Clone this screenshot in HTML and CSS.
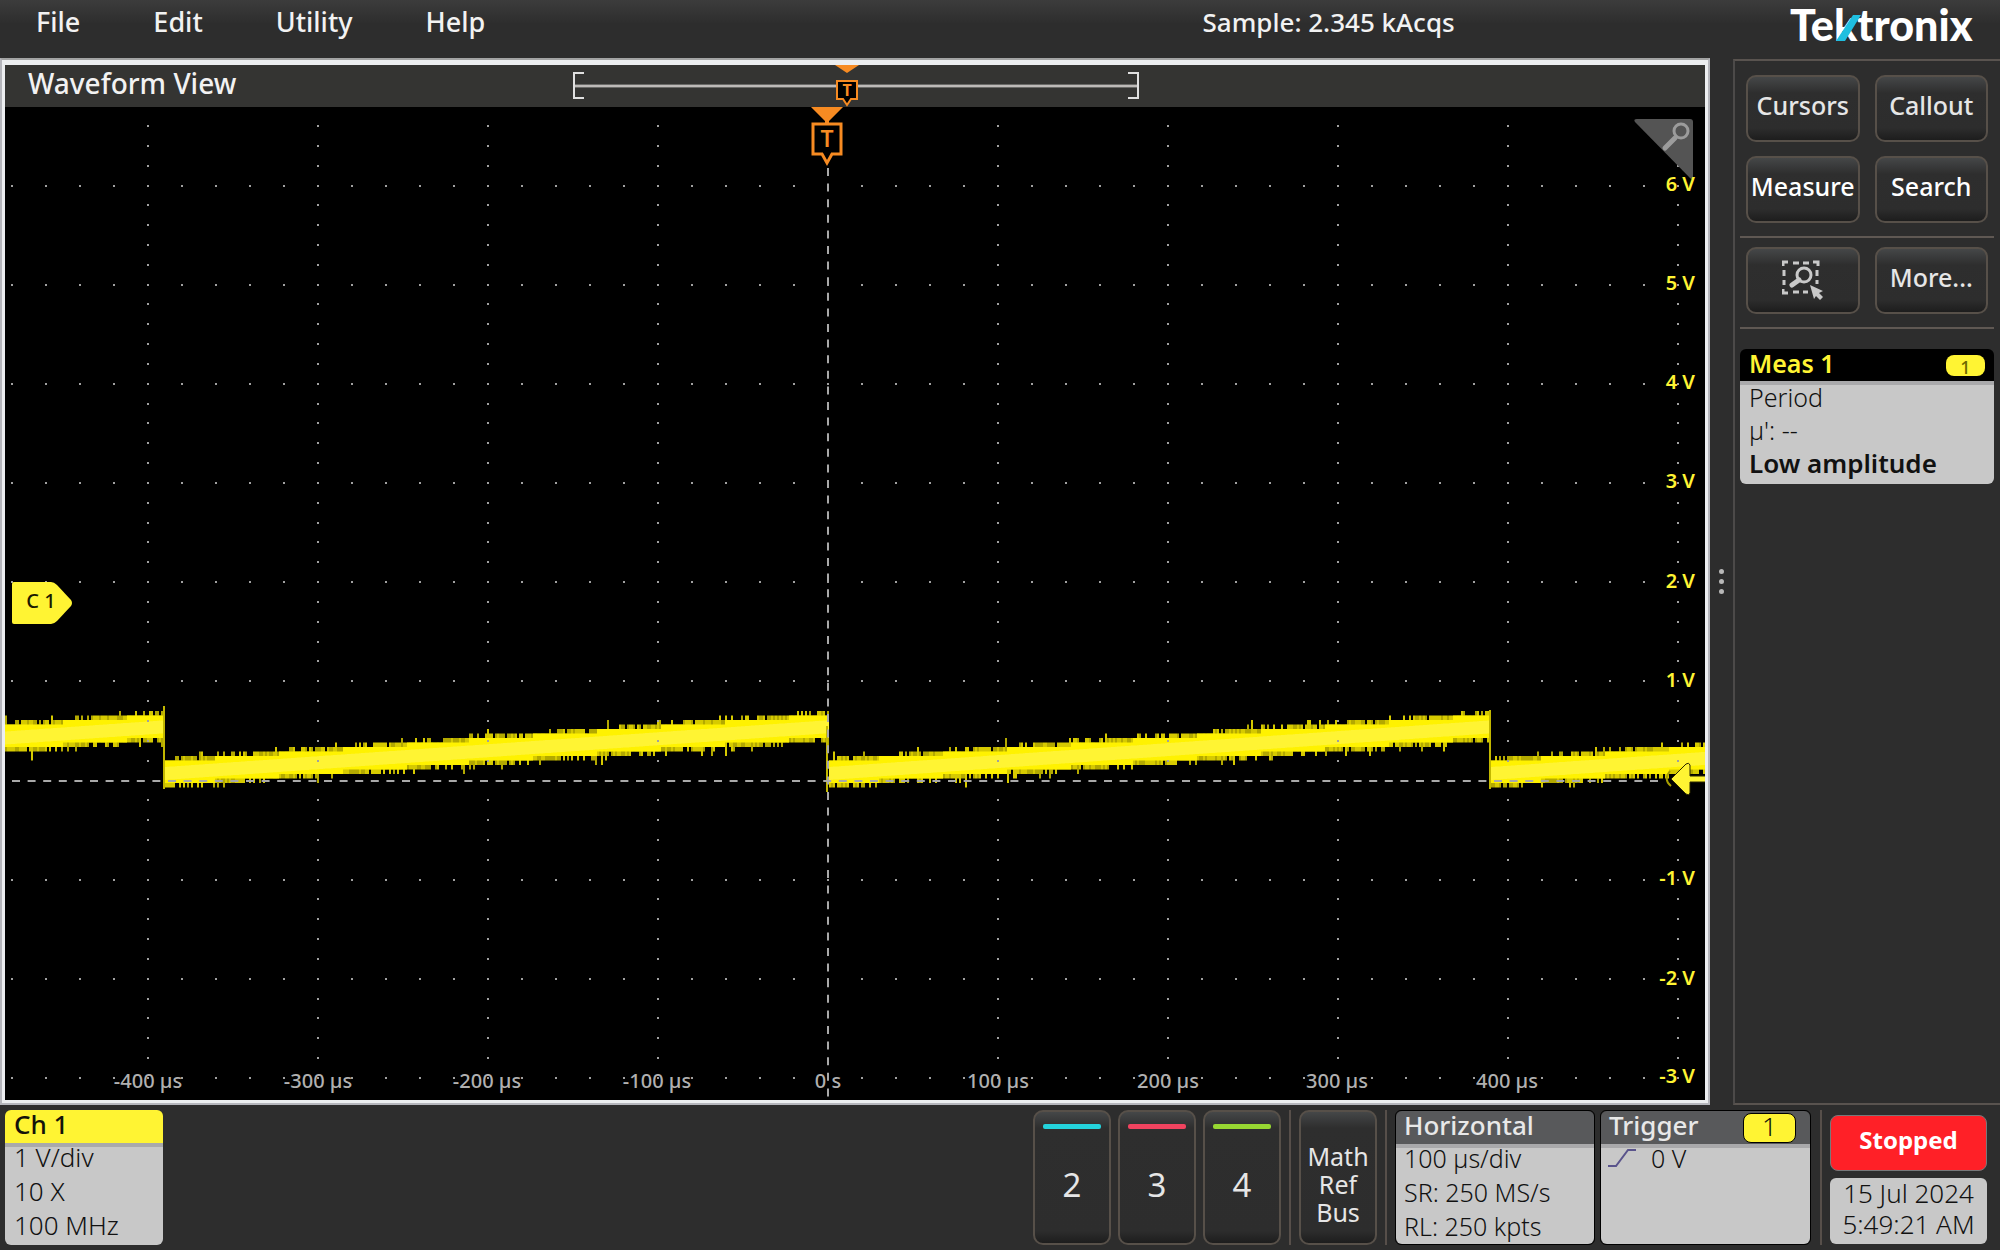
FILE: index.html
```html
<!DOCTYPE html>
<html lang="en">
<head>
<meta charset="utf-8">
<meta name="viewport" content="width=device-width, initial-scale=1">
<title>Oscilloscope</title>
<link rel="stylesheet" href="styles.css">
</head>
<body>
<header class="topbar">
  <nav class="menu">
    <button type="button" class="menu-item">File</button>
    <button type="button" class="menu-item">Edit</button>
    <button type="button" class="menu-item">Utility</button>
    <button type="button" class="menu-item">Help</button>
  </nav>
  <div class="sample">Sample: 2.345 kAcqs</div>
  <svg class="logo" viewBox="0 0 190 46" role="img" aria-label="Tektronix">
    <text x="2" y="41" class="logo-text">Tektronix</text>
    <path d="M48 41 65 15h8L57 41z" fill="#1fbfe0"/>
  </svg>
</header>

<main class="workspace">
  <section class="view">
    <div class="view-head">
      <h1 class="view-title">Waveform View</h1>
      <svg class="overview" viewBox="572 65 568 42" aria-hidden="true">
        <path d="M574 86H1138" stroke="#6a6a68" stroke-width="4"/>
        <path d="M574 86H1138" stroke="#bdbab8" stroke-width="2"/>
        <path d="M584 73H574V98H584M1128 73H1138V98H1128" fill="none" stroke="#e0e0e0" stroke-width="2"/>
        <path d="M835 65H859L847 73z" fill="#f78b22"/>
        <path d="M837 81H857V99H851L847 105 843 99H837z" fill="#000" stroke="#f78b22" stroke-width="2"/>
        <text x="847" y="96" class="mark-small">T</text>
      </svg>
    </div>
    <svg class="plot" viewBox="5 107 1700 993">
      <path id="fringe-low" fill="#b3a900"/>
      <path id="fringe" fill="#d6ca00"/>
      <path id="core" fill="#fff200"/>
      <path id="glow" fill="#fff433"/>
      <path d="M164 706V789M827 726V792M1490 710V789" stroke="#c2b700" stroke-width="2"/>
      <path id="dots" fill="#a0a0a0"/>
      <path d="M12 781H1664" stroke="#a9a9a9" stroke-width="2" stroke-dasharray="8 7.6"/>
      <path d="M828 168V1100" stroke="#a9a9a9" stroke-width="2" stroke-dasharray="8 7.6"/>
      <path d="M811 107H843L829 121V123H825V121z" fill="#f78b22"/>
      <path d="M813 124H841V154H832L827 163 822 154H813z" fill="#000" stroke="#f78b22" stroke-width="3"/>
      <text x="827" y="147" class="mark">T</text>
      <path d="M1637 119H1690Q1693 119 1693 122V177Q1693 181 1690 178L1635 122Q1633 119 1637 119z" fill="#545454"/>
      <path d="M1675 138 1665 148" stroke="#9c9c9c" stroke-width="5" stroke-linecap="round"/>
      <circle cx="1681" cy="131" r="7" fill="none" stroke="#9c9c9c" stroke-width="3"/>
      <path d="M14 582H51Q54 582 57 585L71 600Q73 603 71 606L57 621Q54 624 51 624H14Q12 624 12 622V584Q12 582 14 582z" fill="#fff433"/>
      <text x="41" y="608" class="tag">C 1</text>
      <path d="M1670 771Q1663 780 1671 786" fill="none" stroke="#a89f00" stroke-width="2"/>
      <path d="M1671 779 1686 764Q1689 762 1690 765V776H1706V782H1690V793Q1689 796 1686 794z" fill="#fff433" stroke="#2a2700"/>
      <g class="volts">
        <text x="1695" y="191">6 V</text><text x="1695" y="290">5 V</text>
        <text x="1695" y="389">4 V</text><text x="1695" y="488">3 V</text>
        <text x="1695" y="588">2 V</text><text x="1695" y="687">1 V</text>
        <text x="1695" y="885">-1 V</text><text x="1695" y="985">-2 V</text>
        <text x="1695" y="1083">-3 V</text>
      </g>
      <g class="times">
        <text x="148" y="1088">-400 µs</text><text x="318" y="1088">-300 µs</text>
        <text x="487" y="1088">-200 µs</text><text x="657" y="1088">-100 µs</text>
        <text x="828" y="1088">0 s</text>
        <text x="998" y="1088">100 µs</text><text x="1168" y="1088">200 µs</text>
        <text x="1337" y="1088">300 µs</text><text x="1507" y="1088">400 µs</text>
      </g>
    </svg>
  </section>

  <div class="splitter"><i></i><i></i><i></i></div>

  <aside class="side">
    <div class="tools">
      <button type="button" class="key">Cursors</button>
      <button type="button" class="key">Callout</button>
      <button type="button" class="key bright">Measure</button>
      <button type="button" class="key bright">Search</button>
    </div>
    <div class="tools">
      <button type="button" class="key" aria-label="Zoom area">
        <svg class="zoom-icon" viewBox="0 0 42 40" aria-hidden="true">
          <g fill="none" stroke="#c9c9c9">
            <path d="M1 6V2H6M11 3H17M21 3H27M31 2H36V6M2 10V16M35 10V16M2 20V25M35 20V24M1 29V33H6M11 32H17M21 32H26" stroke-width="3"/>
            <circle cx="22" cy="15" r="7" stroke-width="3"/>
            <path d="M17 20 10 25" stroke-width="5" stroke-linecap="round"/>
          </g>
          <path d="M28 25 41 31 37 33 41 37 38 40 34 36 32 39z" fill="#c9c9c9"/>
        </svg>
      </button>
      <button type="button" class="key">More...</button>
    </div>
    <article class="meas">
      <div class="meas-head"><h2>Meas 1</h2><span class="chip">1</span></div>
      <div class="card-body"><p>Period</p><p>µ': --</p><p class="strong">Low amplitude</p></div>
    </article>
  </aside>
</main>

<footer class="bottombar">
  <article class="card channel">
    <h2 class="card-head yellow">Ch 1</h2>
    <div class="card-body"><p>1 V/div</p><p>10 X</p><p>100 MHz</p></div>
  </article>
  <div class="channels">
    <button type="button" class="key chan cyan">2</button>
    <button type="button" class="key chan red">3</button>
    <button type="button" class="key chan green">4</button>
  </div>
  <div class="math-wrap"><button type="button" class="key math">Math<br>Ref<br>Bus</button></div>
  <article class="card horizontal">
    <h2 class="card-head grey">Horizontal</h2>
    <div class="card-body"><p>100 µs/div</p><p>SR: 250 MS/s</p><p>RL: 250 kpts</p></div>
  </article>
  <article class="card trigger">
    <div class="card-head grey"><h2>Trigger</h2><span class="source">1</span></div>
    <div class="card-body"><p class="level">
      <svg class="edge" viewBox="0 0 28 20" aria-hidden="true"><path d="M0 18H8L20 2H28" fill="none" stroke="#5a548c" stroke-width="2"/></svg>0 V</p></div>
  </article>
  <div class="status">
    <button type="button" class="stopped">Stopped</button>
    <time class="clock" datetime="2024-07-15T05:49:21">15 Jul 2024<br>5:49:21 AM</time>
  </div>
</footer>
<script src="scope.js"></script>
</body>
</html>
```
FILE: styles.css
```css
* { box-sizing: border-box; }

body {
  margin: 0;
  min-height: 100vh;
  display: flex;
  flex-direction: column;
  background: #2d2d2d;
  color: #f2f2f2;
  font-family: "Noto Sans", "Open Sans", sans-serif;
  font-size: 25px;
  line-height: 34px;
}

h1, h2, p { margin: 0; font: inherit; }
button { font: inherit; color: inherit; padding: 0; border: 0; background: none; }
svg { display: block; }

/* Top bar */
.topbar {
  height: 58px;
  flex: none;
  display: grid;
  grid-template-columns: 1fr 1fr 1fr;
  align-items: start;
  padding: 0 22px 0 36px;
  background: linear-gradient(#3c3c3c, #2d2d2d 24px);
  font-size: 26px;
  font-weight: 500;
}
.menu { display: flex; gap: 73px; padding-top: 5px; font-size: 27px; }
.sample { padding-top: 5px; justify-self: end; margin-right: -124px; white-space: nowrap; }
.logo { width: 190px; height: 46px; justify-self: end; overflow: visible; }
.logo-text { font: 900 43px Lato, sans-serif; fill: #fff; }

/* Waveform view */
.workspace {
  flex: 1;
  display: grid;
  grid-template-columns: minmax(0, 1fr) 23px 267px;
}
.view {
  display: flex;
  flex-direction: column;
  border: 2px solid #b5b6bc;
  border-top-color: #a2a3a3;
  padding: 5px 3px 3px;
  background: #eceef0;
}
.view-head {
  height: 42px;
  display: flex;
  background: #343432;
}
.view-title {
  width: 567px;
  padding: 1px 0 0 23px;
  font-size: 28px;
  font-weight: 500;
}
.overview { width: 568px; height: 42px; }
.plot { width: 100%; flex: 1; min-height: 0; background: #000; }
.plot text { text-anchor: middle; font-size: 20px; font-weight: 500; }
.plot .mark { fill: #f78b22; font-size: 23px; font-weight: 600; }
.mark-small { fill: #f78b22; font-size: 16px; font-weight: 700; text-anchor: middle; }
.plot .tag { fill: #1b1a00; }
.plot .volts text { text-anchor: end; fill: #fff433; font-weight: 600; }
.times { fill: #b0b0b0; }

.splitter {
  display: flex;
  flex-direction: column;
  align-items: center;
  justify-content: center;
  gap: 5px;
}
.splitter i { width: 5px; height: 5px; border-radius: 50%; background: #b8b8b8; }

/* Side panel */
.side {
  margin-top: 1px;
  padding: 0 6px 0 5px;
  border: 2px solid #59534f;
  border-right: 0;
  border-left-color: #4c4a49;
}
.tools {
  display: grid;
  grid-template-columns: 1fr 1fr;
  gap: 14px 15px;
  padding: 14px 6px;
  border-bottom: 2px solid #5f5853;
}
.tools:first-child { padding-bottom: 13px; }
.tools + .tools { padding-top: 9px; padding-bottom: 13px; }
.key {
  height: 67px;
  padding-bottom: 7px;
  border: 2px solid #575049;
  border-radius: 10px;
  background: linear-gradient(#454748, #2e2e2e 16px, #2d2d2d calc(100% - 12px), #1d1d1d);
  color: #e6e6e6;
  font-weight: 500;
}
.bright { color: #fff; }
.zoom-icon { width: 42px; height: 40px; margin: 5px auto 0; }

.card-body {
  height: 103px;
  padding: 0 9px;
  border-top: 4px solid #a9a9ab;
  border-radius: 0 0 6px 6px;
  background: #c8c8c8;
  color: #111;
  font-weight: 350;
  line-height: 33px;
  white-space: nowrap;
}
.card-body p:first-child { margin-top: -4px; }
.card-body .strong { font-size: 26px; font-weight: 600; }

.meas { margin-top: 20px; }
.meas-head {
  height: 32px;
  display: flex;
  justify-content: space-between;
  align-items: center;
  padding: 0 9px;
  border-radius: 6px 6px 0 0;
  background: #000;
  color: #fff433;
  font-weight: 600;
}
.meas-head h2 { padding-bottom: 4px; }
.chip {
  width: 39px;
  height: 21px;
  border-radius: 8px;
  background: #fff433;
  color: #6d6700;
  text-align: center;
  font-size: 18px;
  font-weight: 500;
  line-height: 25px;
}

/* Bottom bar */
.bottombar {
  height: 145px;
  flex: none;
  display: flex;
  align-items: flex-start;
  padding: 5px 13px 5px 5px;
}
.card { border-radius: 6px; height: 135px; }
.card .card-body { height: 102px; line-height: 34px; }
.card .card-body p:first-child { margin-top: -7px; }
.card-head { height: 33px; padding: 0 9px; border-radius: 6px 6px 0 0; font-size: 26px; line-height: 29px; font-weight: 500; }
.yellow { background: #fff433; color: #14130a; }
.grey { background: #58595b; color: #e8e8e8; }
.channel { width: 158px; margin-right: auto; }
.channel .card-body { font-size: 26px; }
.channels { display: flex; gap: 7px; padding-right: 8px; }
.chan, .math { width: 78px; height: 135px; }
.chan { display: grid; grid-template-rows: 6px 1fr; justify-items: center; align-items: center; padding: 11px 0 3px; font-size: 33px; font-weight: 400; }
.chan::before { content: ""; width: 58px; height: 5px; border-radius: 2px; background: currentColor; }
.cyan::before { background: #24d3dc; }
.red::before { background: #f0435f; }
.green::before { background: #97d732; }
.math-wrap {
  padding: 0 8px;
  border: solid #574f4a;
  border-width: 0 2px;
}
.math { line-height: 28px; padding: 12px 0 0; font-weight: 400; }
.horizontal, .trigger { border: 1px solid #000; }
.horizontal .card-head, .horizontal .card-body, .trigger .card-head { padding-left: 8px; }
.horizontal .card-body, .trigger .card-body { height: 100px; }
.horizontal { width: 200px; margin: 0 5px 0 8px; }
.trigger { width: 211px; }
.trigger .card-head { display: flex; justify-content: space-between; padding-right: 14px; }
.source {
  width: 53px;
  height: 30px;
  margin-top: 2px;
  border: 1px solid #000;
  border-radius: 8px;
  background: #fff433;
  color: #14130a;
  text-align: center;
  font-weight: 350;
  line-height: 25px;
}
.level { display: flex; align-items: center; gap: 14px; margin-left: -3px; }
.edge { width: 30px; height: 20px; }
.status {
  width: 167px;
  height: 135px;
  margin-left: 9px;
  padding: 5px 0 0 8px;
  border-left: 2px solid #574f4a;
  display: flex;
  flex-direction: column;
  gap: 7px;
}
.stopped {
  height: 56px;
  padding-bottom: 6px;
  border: 1px solid #77787a;
  border-radius: 8px;
  background: #ff2027;
  color: #fff;
  font-size: 24px;
  font-weight: 700;
}
.clock {
  height: 66px;
  border-radius: 6px;
  background: #c8c8c8;
  color: #111;
  text-align: center;
  font-size: 26px;
  font-weight: 350;
  line-height: 31px;
  white-space: nowrap;
}
```
FILE: scope.js
```js
// Graticule dots: ten columns and ten rows of divisions, five minor steps each.
const cols = Array.from({ length: 10 }, (_, i) => 148 + i * 170);
const rows = Array.from({ length: 10 }, (_, i) => 185.5 + i * 99.15);
let dots = '';
const dot = (x, y) => { dots += `M${Math.round(x) - 1} ${Math.round(y) - 1}h2v2h-2z`; };
for (const y of rows) {
  if (Math.abs(y - 780.5) < 2) continue;
  for (let x = 12; x < 1700; x += 34) dot(x, y);
}
for (const x of cols) {
  if (x === 828) continue;
  for (let k = -3; k <= 45; k++) if (k % 5) dot(x, 185.5 + k * 19.83);
}
document.getElementById('dots').setAttribute('d', dots);

// Sawtooth trace with acquisition noise, quantised to the converter's steps.
let seed = 7;
const rand = () => (seed = (seed * 16807) % 2147483647) / 2147483647;
const noise = () => rand() + rand() + rand() - 1.5;
const step = 4.5;
const up = y => Math.floor(y / step) * step;
const down = y => Math.ceil(y / step) * step;
const paths = { 'fringe-low': '', fringe: '', core: '', glow: '' };
const bar = (id, x, w, a, b) => { paths[id] += `M${x} ${a.toFixed(1)}h${w}V${b.toFixed(1)}h-${w}z`; };
const jumps = [-499, 164, 828, 1490, 2153];
for (let x = 5; x < 1705; x += 2) {
  const start = jumps.filter(j => j <= x).pop();
  const c = 774 - (x - start) * 0.0705;
  const spikeTop = rand() < 0.02 ? 6 : 0;
  const spikeBottom = rand() < 0.03 ? 7 : 0;
  const id = rand() < 0.45 ? 'fringe-low' : 'fringe';
  const w = Math.min(2, 1705 - x);
  bar(id, x, w, up(c - 13 + noise() * 2.6 - spikeTop), down(c + 11 + noise() * 2.6 + spikeBottom));
  bar('core', x, w, up(c - 10), down(c + 8));
  bar('glow', x, w, c - 7, c + 6);
}
for (const id in paths) document.getElementById(id).setAttribute('d', paths[id]);
```
